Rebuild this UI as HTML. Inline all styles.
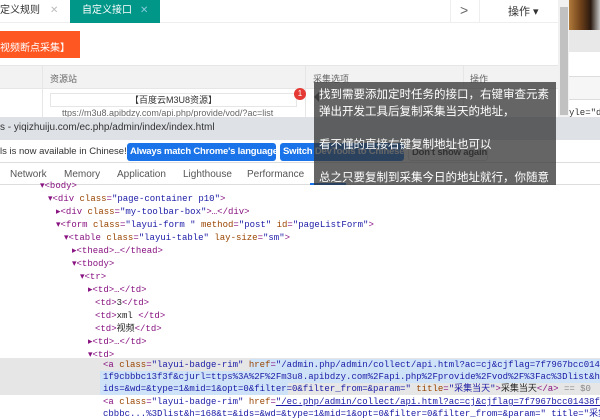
<!DOCTYPE html>
<html><head><meta charset="utf-8"><style>
*{margin:0;padding:0;box-sizing:border-box}
body{width:600px;height:415px;overflow:hidden;background:#fff;position:relative;font-family:"Liberation Sans","Noto Sans CJK SC",sans-serif}
.a{position:absolute;white-space:nowrap}
.m{font-family:"Liberation Mono","Noto Sans CJK SC",monospace;font-size:9px;line-height:12px;color:#881280}
.t{color:#994500}.v{color:#1a1aa6}.g{color:#222}
</style></head><body>
<div class="a" style="left:0;top:0;width:558px;height:23px;border-bottom:1px solid #eee"></div>
<div class="a" style="left:0;top:3px;font-size:10px;line-height:16px;color:#333">定义规则</div>
<div class="a" style="left:50px;top:3px;font-size:10px;line-height:16px;color:#bbb">✕</div>
<div class="a" style="left:70px;top:0;width:90px;height:23px;background:#009688"></div>
<div class="a" style="left:82px;top:3px;font-size:10px;line-height:16px;color:#fff">自定义接口</div>
<div class="a" style="left:140px;top:3px;font-size:10px;line-height:16px;color:#8cd">✕</div>
<div class="a" style="left:450px;top:0;width:1px;height:23px;background:#eee"></div>
<div class="a" style="left:479px;top:0;width:1px;height:23px;background:#eee"></div>
<div class="a" style="left:460px;top:2px;font-size:14px;color:#666">&gt;</div>
<div class="a" style="left:508px;top:3px;font-size:11px;color:#333">操作 ▾</div>
<div class="a" style="left:0;top:31px;width:80px;height:27px;background:#ff5722;color:#fff;font-size:10px;padding:8px 0 0 0">视频断点采集】</div>
<div class="a" style="left:0;top:65px;height:23px;background:#f2f2f2;width:558px;border-top:1px solid #e6e6e6"></div>
<div class="a" style="left:0;top:88px;width:558px;height:1px;background:#e6e6e6"></div>
<div class="a" style="left:42px;top:65px;width:1px;height:52px;background:#e6e6e6"></div>
<div class="a" style="left:305px;top:65px;width:1px;height:52px;background:#e6e6e6"></div>
<div class="a" style="left:463px;top:65px;width:1px;height:52px;background:#e6e6e6"></div>
<div class="a" style="left:50px;top:72px;font-size:9px;color:#666">资源站</div>
<div class="a" style="left:313px;top:72px;font-size:9px;color:#666">采集选项</div>
<div class="a" style="left:470px;top:72px;font-size:9px;color:#666">操作</div>
<div class="a" style="left:50px;top:93px;width:247px;height:14px;border:1px solid #e6e6e6;font-size:9px;color:#333;text-align:center;line-height:12px">【百度云M3U8资源】</div>
<div class="a" style="left:62px;top:108px;font-size:9px;color:#666">ttps://m3u8.apibdzy.com/api.php/provide/vod/?ac=list</div>
<div class="a" style="left:294px;top:88px;width:12px;height:12px;border-radius:6px;background:#e53935;color:#fff;font-size:8px;text-align:center;line-height:12px">1</div>
<div class="a" style="left:558px;top:0;width:11px;height:117px;background:#f1f1f1"></div>
<div class="a" style="left:560px;top:7px;width:8px;height:108px;background:#c1c1c1"></div>
<div class="a" style="left:569px;top:0;width:31px;height:30px;background:linear-gradient(90deg,#b07a3a,#6b3e18 40%,#2a1a10 70%,#c8c8c8)"></div>
<div class="a" style="left:569px;top:30px;width:31px;height:22px;background:#e8e8e8"></div>
<div class="a" style="left:569px;top:76px;width:31px;height:24px;background:#f6f6f6;border-top:1px solid #ddd;border-bottom:1px solid #ddd"></div>
<div class="a m" style="left:569px;top:107px;color:#333">yle="d:</div>
<div class="a" style="left:0;top:117px;width:600px;height:23px;background:#dee1e6"></div>
<div class="a" style="left:0;top:122px;font-size:10px;color:#333">s - yiqizhuiju.com/ec.php/admin/index/index.html</div>
<div class="a" style="left:0;top:140px;width:600px;height:23px;background:#fff;border-bottom:1px solid #ddd"></div>
<div class="a" style="left:0;top:146px;font-size:9.5px;color:#333">ls is now available in Chinese!</div>
<div class="a" style="left:127px;top:143px;width:149px;height:18px;background:#1a73e8;border-radius:3px;color:#fff;font-size:9.5px;font-weight:bold;padding:3px 0 0 3px;overflow:hidden;letter-spacing:-0.2px">Always match Chrome's language</div>
<div class="a" style="left:280px;top:143px;width:124px;height:18px;background:#1a73e8;border-radius:3px;color:#fff;font-size:9.5px;font-weight:bold;padding:3px 0 0 3px;overflow:hidden;letter-spacing:-0.2px">Switch DevTools to Chinese</div>
<div class="a" style="left:408px;top:143px;width:80px;height:18px;border:1px solid #ddd;border-radius:3px;color:#333;font-size:9.5px;font-weight:bold;padding:3px 0 0 3px;overflow:hidden;letter-spacing:-0.2px">Don't show again</div>
<div class="a" style="left:0;top:164px;width:600px;height:21px;border-bottom:1px solid #ddd;background:#fff"></div>
<div class="a" style="left:10px;top:169px;font-size:10px;color:#555">Network</div>
<div class="a" style="left:64px;top:169px;font-size:10px;color:#555">Memory</div>
<div class="a" style="left:117px;top:169px;font-size:10px;color:#555">Application</div>
<div class="a" style="left:183px;top:169px;font-size:10px;color:#555">Lighthouse</div>
<div class="a" style="left:247px;top:169px;font-size:10px;color:#555">Performance</div>
<div class="a" style="left:310px;top:183px;width:36px;height:2px;background:#1a73e8"></div>
<div class="a m" style="left:40px;top:180px">▾&lt;body&gt;</div>
<div class="a m" style="left:48px;top:193px">▾&lt;div <span class="t">class</span>=<span class="v">"page-container p10"</span>&gt;</div>
<div class="a m" style="left:56px;top:206px">▸&lt;div <span class="t">class</span>=<span class="v">"my-toolbar-box"</span>&gt;…&lt;/div&gt;</div>
<div class="a m" style="left:56px;top:219px">▾&lt;form <span class="t">class</span>=<span class="v">"layui-form "</span> <span class="t">method</span>=<span class="v">"post"</span> <span class="t">id</span>=<span class="v">"pageListForm"</span>&gt;</div>
<div class="a m" style="left:64px;top:232px">▾&lt;table <span class="t">class</span>=<span class="v">"layui-table"</span> <span class="t">lay-size</span>=<span class="v">"sm"</span>&gt;</div>
<div class="a m" style="left:72px;top:245px">▸&lt;thead&gt;…&lt;/thead&gt;</div>
<div class="a m" style="left:72px;top:258px">▾&lt;tbody&gt;</div>
<div class="a m" style="left:80px;top:271px">▾&lt;tr&gt;</div>
<div class="a m" style="left:88px;top:284px">▸&lt;td&gt;…&lt;/td&gt;</div>
<div class="a m" style="left:95px;top:297px">&lt;td&gt;<span class="g">3</span>&lt;/td&gt;</div>
<div class="a m" style="left:95px;top:310px">&lt;td&gt;<span class="g">xml </span>&lt;/td&gt;</div>
<div class="a m" style="left:95px;top:323px">&lt;td&gt;<span class="g">视频</span>&lt;/td&gt;</div>
<div class="a m" style="left:88px;top:336px">▸&lt;td&gt;…&lt;/td&gt;</div>
<div class="a m" style="left:88px;top:349px">▾&lt;td&gt;</div>
<div class="a" style="left:0;top:358px;width:600px;height:37px;background:#e6e6e6"></div>
<div class="a" style="left:250px;top:359px;width:350px;height:12px;background:#cfe3f8"></div>
<div class="a" style="left:100px;top:371px;width:500px;height:12px;background:#cfe3f8"></div>
<div class="a" style="left:100px;top:383px;width:188px;height:12px;background:#cfe3f8"></div>
<div class="a m" style="left:103px;top:359px">&lt;a <span class="t">class</span>=<span class="v">"layui-badge-rim"</span> <span class="t">href</span>=<span class="v">"/admin.php/admin/collect/api.html?ac=cj&amp;cjflag=7f7967bcc0143</span></div>
<div class="a m v" style="left:103px;top:371px">1f9cbbbc13f3f&amp;cjurl=ttps%3A%2F%2Fm3u8.apibdzy.com%2Fapi.php%2Fprovide%2Fvod%2F%3Fac%3Dlist&amp;h=</div>
<div class="a m" style="left:103px;top:383px"><span class="v">ids=&amp;wd=&amp;type=1&amp;mid=1&amp;opt=0&amp;filter=0&amp;filter_from=&amp;param="</span> <span class="t">title</span>=<span class="v">"采集当天"</span>&gt;<span class="g">采集当天</span>&lt;/a&gt; <span style="color:#888">== $0</span></div>
<div class="a m" style="left:103px;top:396px">&lt;a <span class="t">class</span>=<span class="v">"layui-badge-rim"</span> <span class="t">href</span>=<span class="v" style="text-decoration:underline">"/ec.php/admin/collect/api.html?ac=cj&amp;cjflag=7f7967bcc01438f7</span></div>
<div class="a m v" style="left:103px;top:408px">cbbbc...%3Dlist&amp;h=168&amp;t=&amp;ids=&amp;wd=&amp;type=1&amp;mid=1&amp;opt=0&amp;filter=0&amp;filter_from=&amp;param=" title="采集</div>
<div class="a" style="left:309px;top:92px;width:0;height:0;border:5px solid transparent;border-right-color:rgba(50,50,50,.75)"></div>
<div class="a" style="left:314px;top:82px;width:242px;height:103px;background:rgba(50,50,50,.75);color:#fff;font-size:11.5px;line-height:16.5px;padding:5px 0 0 5px;white-space:normal">找到需要添加定时任务的接口，右键审查元素<br>弹出开发工具后复制采集当天的地址，<br><br>看不懂的直接右键复制地址也可以<br><br>总之只要复制到采集今日的地址就行，你随意</div>
</body></html>
